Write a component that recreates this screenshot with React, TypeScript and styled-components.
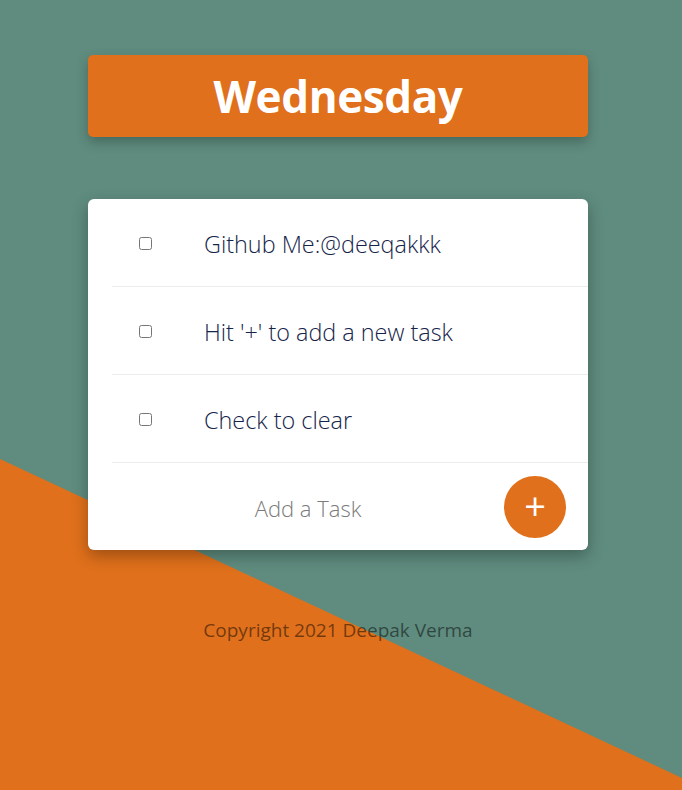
import React, { useState } from 'react';
import styled, { createGlobalStyle } from 'styled-components';

const GlobalStyle = createGlobalStyle`
  html, body {
    margin: 0;
    padding: 0;
  }
  body {
    font-family: "Open Sans", "Noto Sans", sans-serif;
    background: #5f8c7e;
  }
  * {
    box-sizing: border-box;
  }
`;

const Page = styled.div`
  position: relative;
  min-height: 790px;
  overflow: hidden;
  background: #5f8c7e;
`;

const Slope = styled.div`
  position: absolute;
  inset: 0;
  background: #e0701b;
  clip-path: polygon(0 459px, 682px 778px, 682px 790px, 0 790px);
`;

const Content = styled.div`
  position: relative;
  width: 500px;
  margin-left: 88px;
  padding-top: 55px;
  display: flex;
  flex-direction: column;
`;

const Heading = styled.div`
  height: 82px;
  background: #e0701b;
  border-radius: 5px;
  box-shadow: 0 5px 12px rgba(0, 0, 0, 0.25);
  display: flex;
  align-items: center;
  justify-content: center;
  color: #ffffff;
  font-size: 44px;
  font-weight: 700;
  letter-spacing: -0.4px;
`;

const Card = styled.div`
  margin-top: 62px;
  background: #ffffff;
  border-radius: 6px;
  box-shadow: 0 6px 16px rgba(0, 0, 0, 0.3);
  padding-left: 24px;
  display: flex;
  flex-direction: column;
`;

const Row = styled.div<{ $last?: boolean }>`
  height: ${(p) => (p.$last ? '87px' : '88px')};
  display: flex;
  align-items: center;
  border-bottom: ${(p) => (p.$last ? 'none' : '1px solid #ececec')};
`;

const Check = styled.input`
  width: 13px;
  height: 13px;
  margin: 2px 0 0 27px;
`;

const TaskText = styled.span`
  margin-left: 52px;
  font-size: 23.4px;
  font-weight: 300;
  color: #15244a;
  padding-top: 2px;
`;

const TaskInput = styled.input`
  flex: 1;
  border: none;
  outline: none;
  background: transparent;
  text-align: center;
  font-family: "Open Sans", "Noto Sans", sans-serif;
  font-size: 22px;
  font-weight: 300;
  color: #333;
  padding-top: 4px;
  &::placeholder {
    color: #7a7a7a;
  }
`;

const AddButton = styled.button`
  width: 62px;
  height: 62px;
  margin: 0 22px 0 0;
  border: none;
  border-radius: 50%;
  background: #e0701b;
  color: #ffffff;
  font-family: "Open Sans", sans-serif;
  font-size: 38px;
  font-weight: 400;
  line-height: 1;
  display: flex;
  align-items: center;
  justify-content: center;
  padding: 0 0 4px 0;
`;

const Footer = styled.p`
  margin: 67px 0 0 0;
  text-align: center;
  font-size: 19px;
  color: rgba(0, 0, 0, 0.5);
`;

const App = () => {
  const [tasks] = useState(['Github Me:@deeqakkk', "Hit '+' to add a new task", 'Check to clear']);
  return (
    <>
      <GlobalStyle />
      <Page>
        <Slope />
        <Content>
          <Heading>Wednesday</Heading>
          <Card>
            {tasks.map((t) => (
              <Row key={t}>
                <Check type="checkbox" />
                <TaskText>{t}</TaskText>
              </Row>
            ))}
            <Row $last>
              <TaskInput placeholder="Add a Task" />
              <AddButton>+</AddButton>
            </Row>
          </Card>
          <Footer>Copyright 2021 Deepak Verma</Footer>
        </Content>
      </Page>
    </>
  );
};

export default App;
